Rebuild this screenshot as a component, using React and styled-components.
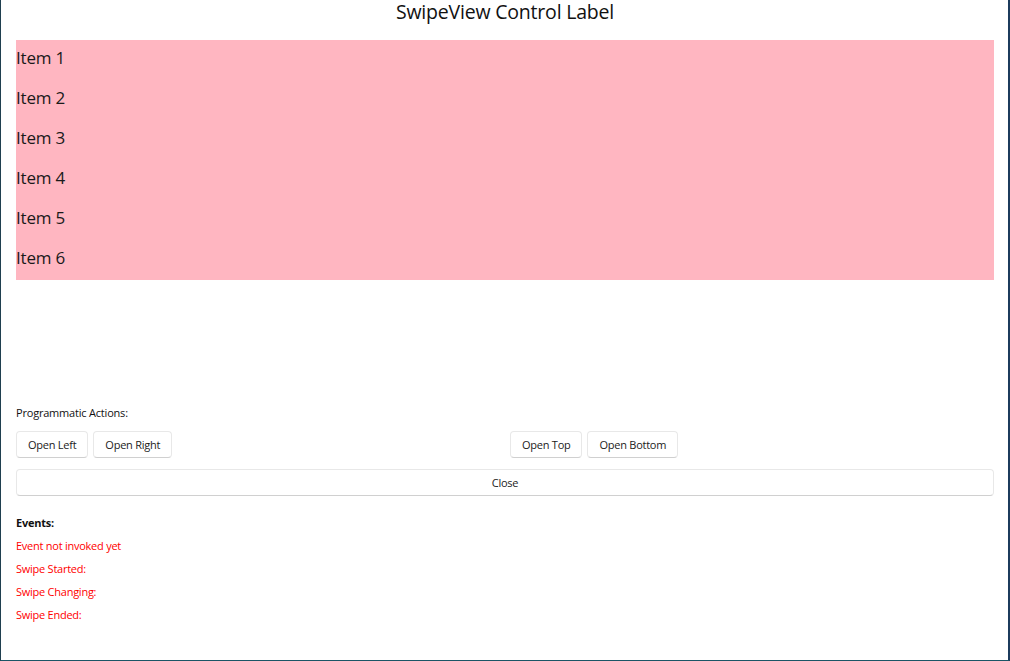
import React from "react";
import styled, { createGlobalStyle } from "styled-components";

const Global = createGlobalStyle`
  html, body { margin: 0; padding: 0; background: #ffffff; }
  body { font-family: "Open Sans", "Noto Sans", sans-serif; }
`;

const Window = styled.div`
  box-sizing: border-box;
  width: 1010px;
  height: 661px;
  border-left: 1px solid #1f3f4f;
  border-right: 2px solid #1c3b5c;
  border-bottom: 1px solid #1a5566;
  background: #fff;
  display: flex;
  flex-direction: column;
  padding: 0 14px 0 15px;
`;

const Title = styled.div`
  box-sizing: border-box;
  height: 40px;
  padding-top: 1px;
  display: flex;
  justify-content: center;
  align-items: flex-start;
  font-size: 19.5px;
  line-height: 21px;
  color: #111;
  letter-spacing: -0.2px;
`;

const List = styled.div`
  background: #ffb6c1;
  display: flex;
  flex-direction: column;
`;

const Item = styled.div`
  height: 40px;
  font-size: 17px;
  line-height: 35px;
  color: #1a1a1a;
  letter-spacing: -0.2px;
`;

const Spacer = styled.div`
  height: 125px;
`;

const Label = styled.div`
  font-size: 11px;
  line-height: 15px;
  letter-spacing: -0.2px;
  color: #111;
`;

const ActionGrid = styled.div`
  display: grid;
  grid-template-columns: 1fr 1fr;
  column-gap: 10px;
  margin-top: 11px;
`;

const Group = styled.div`
  display: flex;
  gap: 5px;
`;

const Button = styled.button`
  box-sizing: border-box;
  height: 27px;
  padding: 0 ${(p) => (p.$wide ? 0 : "11px")};
  width: ${(p) => (p.$wide ? "100%" : "auto")};
  background: #fff;
  border: 1px solid #e8e8e8;
  border-bottom-color: #d0d0d0;
  border-radius: 4px;
  font-family: "Open Sans", "Noto Sans", sans-serif;
  font-size: 11px;
  letter-spacing: -0.25px;
  color: #1b1b1b;
  cursor: pointer;
`;

const CloseRow = styled.div`
  margin-top: 11px;
`;

const Events = styled.div`
  margin-top: 19px;
  display: flex;
  flex-direction: column;
  gap: 8px;
`;

const EventLine = styled.div`
  font-size: 11px;
  line-height: 15px;
  letter-spacing: -0.25px;
  color: ${(p) => p.$color || "#ff0000"};
  font-weight: ${(p) => (p.$bold ? 700 : 400)};
`;

export default function App() {
  const items = ["Item 1", "Item 2", "Item 3", "Item 4", "Item 5", "Item 6"];
  return (
    <>
      <Global />
      <Window>
        <Title>SwipeView Control Label</Title>
        <List>
          {items.map((t) => (
            <Item key={t}>{t}</Item>
          ))}
        </List>
        <Spacer />
        <Label>Programmatic Actions:</Label>
        <ActionGrid>
          <Group>
            <Button>Open Left</Button>
            <Button>Open Right</Button>
          </Group>
          <Group>
            <Button>Open Top</Button>
            <Button>Open Bottom</Button>
          </Group>
        </ActionGrid>
        <CloseRow>
          <Button $wide>Close</Button>
        </CloseRow>
        <Events>
          <EventLine $bold $color="#111">Events:</EventLine>
          <EventLine>Event not invoked yet</EventLine>
          <EventLine>Swipe Started:</EventLine>
          <EventLine>Swipe Changing:</EventLine>
          <EventLine>Swipe Ended:</EventLine>
        </Events>
      </Window>
    </>
  );
}
